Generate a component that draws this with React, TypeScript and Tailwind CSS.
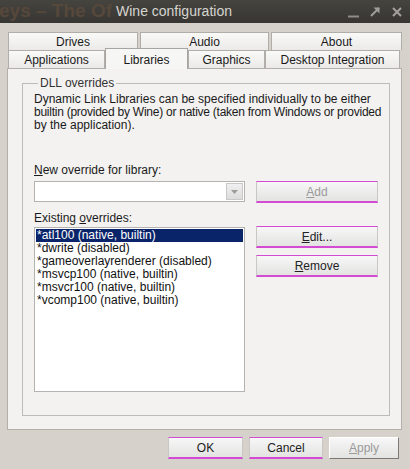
import React from "react";

const ui = { fontFamily: '"Liberation Sans", Arial, sans-serif' };

function Tab({
  label,
  w,
  active = false,
}: {
  label: string;
  w: string;
  active?: boolean;
}) {
  if (active) {
    return (
      <div
        className={`${w} relative z-10 -mt-[2px] -mb-[1px] flex h-[21px] items-start justify-center border border-b-0 border-[#a7a5a1] bg-[#f6f6f5] pt-[2px] text-[12px] text-[#1a1a1a]`}
      >
        {label}
      </div>
    );
  }
  return (
    <div
      className={`${w} flex h-[18px] items-center justify-center border border-b-0 border-[#b1aea9] bg-gradient-to-b from-[#f9f9f8] to-[#ebeae8] text-[12px] text-[#1a1a1a]`}
    >
      {label}
    </div>
  );
}

function Btn({
  children,
  w,
  disabled = false,
  focus = true,
}: {
  children: React.ReactNode;
  w: string;
  disabled?: boolean;
  focus?: boolean;
}) {
  const edge = focus
    ? "border-x border-x-[#c9c7c4] border-t border-t-[#d24bd2] border-b-2 border-b-[#d24bd2]"
    : "border border-t-white border-l-white border-r-[#7c7a76] border-b-[#7c7a76]";
  return (
    <div
      className={`${w} ${edge} flex h-[22px] items-center justify-center bg-gradient-to-b from-[#f7f7f7] to-[#e3e3e2] text-[12px] ${
        disabled ? "text-[#9a9a9a]" : "text-[#222]"
      }`}
    >
      {children}
    </div>
  );
}

const overrides = [
  "*atl100 (native, builtin)",
  "*dwrite (disabled)",
  "*gameoverlayrenderer (disabled)",
  "*msvcp100 (native, builtin)",
  "*msvcr100 (native, builtin)",
  "*vcomp100 (native, builtin)",
];

export default function App() {
  return (
    <div
      className="flex h-[469px] w-[410px] flex-col overflow-hidden bg-[#d6d2cb]"
      style={ui}
    >
      {/* title bar */}
      <div className="relative flex h-[23px] shrink-0 items-center justify-center bg-gradient-to-b from-[#46443f] to-[#383633]">
        <span className="absolute left-[-1px] top-[-3px] w-[113px] overflow-hidden whitespace-nowrap text-[19px] font-bold text-[#56483a]">
          eys – The Of
        </span>
        <span className="relative mr-[62px] text-[14px] text-[#d6d5d0]">
          Wine configuration
        </span>
        <div className="absolute right-[8px] top-0 flex h-[23px] items-center gap-[11px]">
          <svg width="11" height="12" viewBox="0 0 11 12">
            <path d="M0 10.5h11" stroke="#8f8d88" strokeWidth="2" />
          </svg>
          <svg width="11" height="11" viewBox="0 0 11 11">
            <path d="M1 10L9 2" stroke="#a09e99" strokeWidth="2" />
            <path d="M3.5 1.5H9.5V7.5Z" fill="#a09e99" />
          </svg>
          <svg width="10" height="10" viewBox="0 0 10 10">
            <path d="M1 1L9 9M9 1L1 9" stroke="#a3a19c" strokeWidth="2" />
          </svg>
        </div>
      </div>

      {/* tabs */}
      <div className="flex flex-col pl-[8px] pt-[9px]">
        <div className="flex gap-[2px]">
          <Tab label="Drives" w="w-[130px]" />
          <Tab label="Audio" w="w-[129px]" />
          <Tab label="About" w="w-[131px]" />
        </div>
        <div className="flex items-start">
          <Tab label="Applications" w="w-[97px]" />
          <Tab label="Libraries" w="w-[83px]" active />
          <Tab label="Graphics" w="w-[77px]" />
          <Tab label="Desktop Integration" w="w-[135px]" />
        </div>
      </div>

      {/* panel */}
      <div className="ml-[7px] flex h-[362px] w-[395px] flex-col border border-[#b3b0ab] bg-[#f3f2f1] px-[14px] pt-[8px]">
        <fieldset className="flex h-[339px] flex-col border border-[#bdbbb8] px-[11px] pb-0 text-[12px] text-[#1a1a1a]">
          <legend className="ml-[4px] px-[2px] leading-[13px] text-[#333]">
            DLL overrides
          </legend>
          <div className="-mr-[8px] mt-[3px] flex flex-col whitespace-nowrap leading-[13px]">
            <span>
              Dynamic Link Libraries can be specified individually to be either
            </span>
            <span className="tracking-[-0.25px]">
              builtin (provided by Wine) or native (taken from Windows or
              provided
            </span>
            <span>by the application).</span>
          </div>

          <div className="mt-[32px] leading-[13px]">
            <span className="underline">N</span>ew override for library:
          </div>
          <div className="mt-[4px] flex gap-[11px]">
            <div className="flex h-[21px] w-[211px] items-center border border-[#b5b3b0] bg-white pr-[1px]">
              <div className="flex-1" />
              <div className="flex h-[17px] w-[17px] items-center justify-center border border-[#c9c8c6] bg-gradient-to-b from-[#f0f0f0] to-[#dcdcdc]">
                <svg width="7" height="4" viewBox="0 0 7 4">
                  <path d="M0 0H7L3.5 4Z" fill="#9c9b98" />
                </svg>
              </div>
            </div>
            <Btn w="w-[122px]" disabled>
              <span>
                <span className="underline">A</span>dd
              </span>
            </Btn>
          </div>

          <div className="mt-[9px] leading-[13px]">
            Existing <span className="underline">o</span>verrides:
          </div>
          <div className="mt-[2px] flex gap-[11px]">
            <div className="flex h-[165px] w-[211px] flex-col border border-[#b5b3b0] bg-white p-[1px]">
              {overrides.map((o, i) => (
                <div
                  key={o}
                  className={`h-[13px] whitespace-nowrap pl-[1px] leading-[13px] ${
                    i === 0 ? "bg-[#0a246a] text-white" : "text-[#111]"
                  }`}
                >
                  {o}
                </div>
              ))}
            </div>
            <div className="-mt-[1px] flex flex-col gap-[7px]">
              <Btn w="w-[122px]">
                <span>
                  <span className="underline">E</span>dit...
                </span>
              </Btn>
              <Btn w="w-[122px]">
                <span>
                  <span className="underline">R</span>emove
                </span>
              </Btn>
            </div>
          </div>
        </fieldset>
      </div>

      {/* dialog buttons */}
      <div className="mt-[7px] flex justify-end gap-[6px] pr-[11px]">
        <Btn w="w-[75px]">OK</Btn>
        <Btn w="w-[74px]">Cancel</Btn>
        <Btn w="w-[70px]" disabled focus={false}>
          <span>
            <span className="underline">A</span>pply
          </span>
        </Btn>
      </div>
    </div>
  );
}
